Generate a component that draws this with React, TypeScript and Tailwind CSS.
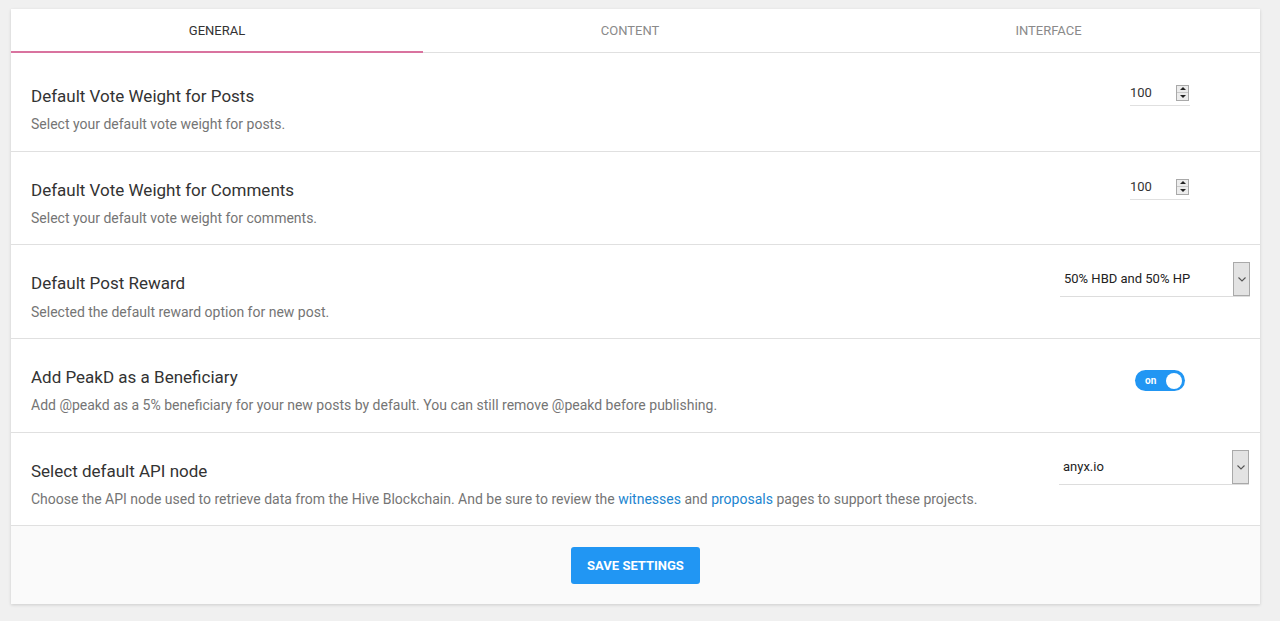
import { useState } from 'react';

type Tab = 'general' | 'content' | 'interface';

const tabs: { id: Tab; label: string }[] = [
  { id: 'general', label: 'General' },
  { id: 'content', label: 'Content' },
  { id: 'interface', label: 'Interface' },
];

function NumberField({ value }: { value: number }) {
  return (
    <div className="flex h-[26px] w-[60px] items-center justify-between border-b border-[#e0e0e0]">
      <span className="text-[13px] text-[#333]">{value}</span>
      <span className="mr-[1px] flex h-[16px] w-[13px] flex-col border border-[#a9a9a9] bg-[#ececec]">
        <span className="flex flex-1 items-center justify-center border-b border-[#c8c8c8]">
          <span className="h-0 w-0 border-x-[3px] border-b-[3px] border-x-transparent border-b-[#222]" />
        </span>
        <span className="flex flex-1 items-center justify-center">
          <span className="h-0 w-0 border-x-[3px] border-t-[3px] border-x-transparent border-t-[#222]" />
        </span>
      </span>
    </div>
  );
}

function SelectField({ value }: { value: string }) {
  return (
    <div className="flex h-[35px] w-[190px] items-stretch justify-between border-b border-[#ddd]">
      <span className="flex items-center pl-[4px] text-[13px] text-[#222]">{value}</span>
      <span className="flex w-[17px] items-center justify-center border border-[#a9a9a9] bg-[#e3e3e3]">
        <svg width="8" height="5" viewBox="0 0 8 5" fill="none">
          <path d="M0.5 0.5 L4 4 L7.5 0.5" stroke="#555" strokeWidth="1.1" />
        </svg>
      </span>
    </div>
  );
}

function Toggle({ on }: { on: boolean }) {
  return (
    <div className="flex h-[21px] w-[50px] items-center justify-between rounded-full bg-[#2196f3] pl-[10px] pr-[3px]">
      <span className="text-[10px] font-bold leading-none text-white">{on ? 'on' : 'off'}</span>
      <span className="h-[16px] w-[16px] rounded-full bg-white" />
    </div>
  );
}

// padding per row, tuned to the reference spacing
function SettingRow({
  title,
  children,
  control,
  pad = 'pt-[26px] pb-[16px]',
  gap = 'mt-[6px]',
}: {
  title: string;
  children: React.ReactNode;
  control: React.ReactNode;
  pad?: string;
  gap?: string;
}) {
  return (
    <div className={`flex justify-between border-b border-[#e0e0e0] pl-[20px] ${pad}`}>
      <div>
        <div className="text-[17px] leading-[24px] text-[#333]">{title}</div>
        <div className={`${gap} text-[14px] leading-[20px] text-[#757575]`}>{children}</div>
      </div>
      <div className="mr-[10px] w-[190px] shrink-0">{control}</div>
    </div>
  );
}

export default function App() {
  const [tab, setTab] = useState<Tab>('general');

  return (
    <div className="min-h-[621px] bg-[#f0f0f0] px-[11px] pt-[9px] pb-[17px]" style={{ fontFamily: 'Roboto, "Noto Sans", sans-serif' }}>
      <div className="w-[1249px] bg-white shadow-[0_1px_3px_rgba(0,0,0,0.15)]">
        <div className="grid grid-cols-[412px_414px_1fr] border-b border-[#e0e0e0]">
          {tabs.map((t) => (
            <button
              key={t.id}
              type="button"
              onClick={() => setTab(t.id)}
              className={`relative h-[43px] pt-[1px] text-[13px] uppercase ${tab === t.id ? 'text-[#333]' : 'text-[#8a8a8a]'}`}
            >
              {t.label}
              {tab === t.id && <span className="absolute right-0 bottom-[-1px] left-0 h-[2px] bg-[#d9739f]" />}
            </button>
          ))}
        </div>

        <SettingRow
          pad="pt-[31px] pb-[17px]"
          title="Default Vote Weight for Posts"
          control={<div className="-mt-[4px] ml-[70px]"><NumberField value={100} /></div>}
        >
          Select your default vote weight for posts.
        </SettingRow>
        <SettingRow title="Default Vote Weight for Comments" control={<div className="-mt-[4px] ml-[70px]"><NumberField value={100} /></div>}>
          Select your default vote weight for comments.
        </SettingRow>
        <SettingRow gap="mt-[7px]" title="Default Post Reward" control={<div className="-mt-[9px]"><SelectField value="50% HBD and 50% HP" /></div>}>
          Selected the default reward option for new post.
        </SettingRow>
        <SettingRow pad="pt-[26px] pb-[17px]" title="Add PeakD as a Beneficiary" control={<div className="mt-[5px] ml-[75px]"><Toggle on /></div>}>
          Add @peakd as a 5% beneficiary for your new posts by default. You can still remove @peakd before publishing.
        </SettingRow>
        <SettingRow title="Select default API node" control={<div className="-mt-[9px] -ml-px"><SelectField value="anyx.io" /></div>}>
          Choose the API node used to retrieve data from the Hive Blockchain. And be sure to review the{' '}
          <a className="text-[#2185d0]">witnesses</a> and <a className="text-[#2185d0]">proposals</a> pages to support these
          projects.
        </SettingRow>

        <div className="flex h-[78px] justify-center bg-[#fafafa] pt-[21px]">
          <button type="button" className="h-[37px] w-[129px] rounded-[3px] bg-[#2196f3] text-[13px] font-bold uppercase text-white">
            Save Settings
          </button>
        </div>
      </div>
    </div>
  );
}
